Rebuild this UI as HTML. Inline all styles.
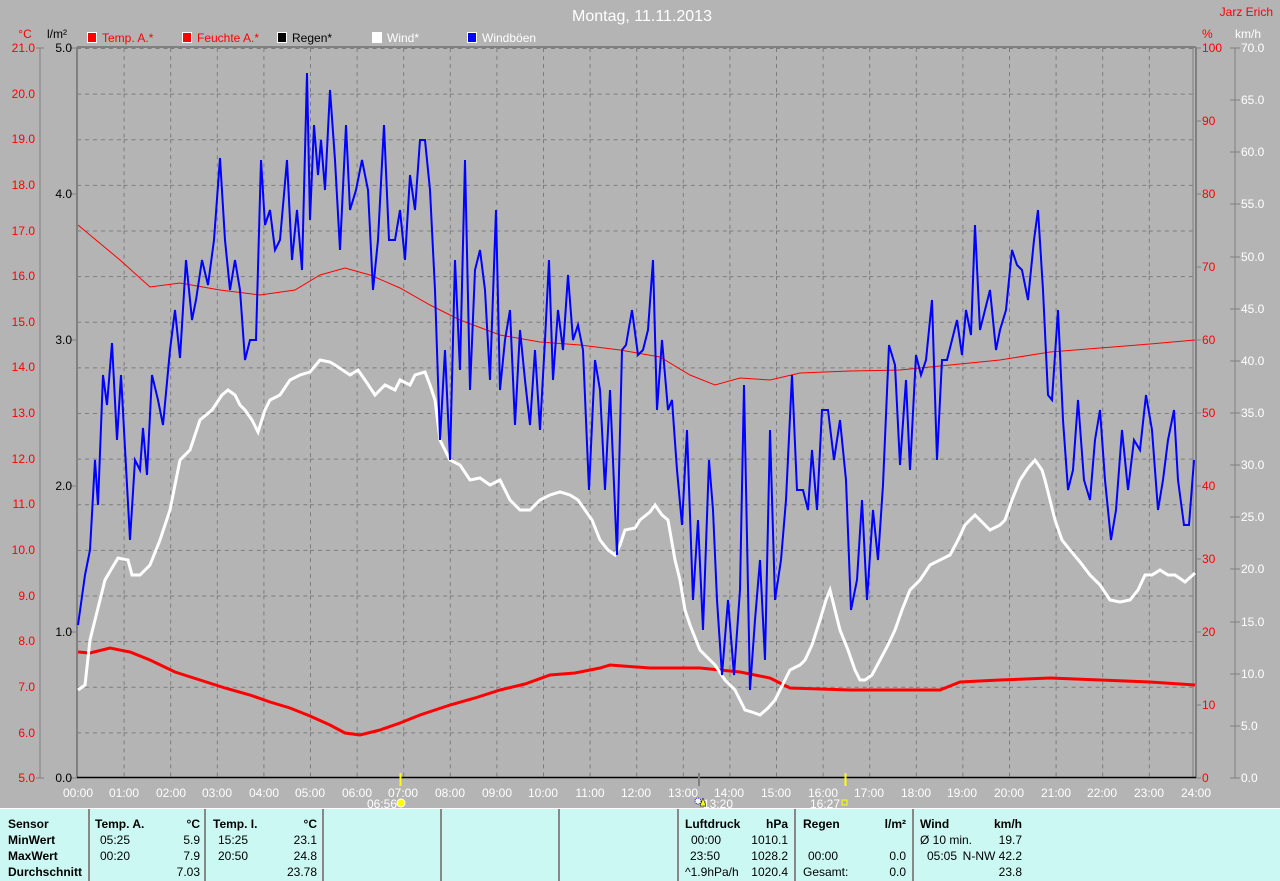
<!DOCTYPE html>
<html><head><meta charset="utf-8"><style>
body{margin:0;background:#b4b4b4;width:1280px;height:881px;overflow:hidden;font-family:"Liberation Sans",sans-serif}
svg{display:block}
</style></head><body>
<svg width="1280" height="881" xmlns="http://www.w3.org/2000/svg" font-family="Liberation Sans, sans-serif" font-size="12">
<defs>
<pattern id="g" x="77" y="48" width="46.6" height="45.625" patternUnits="userSpaceOnUse">
<line x1="0.5" y1="0" x2="0.5" y2="45.625" stroke="#7c7c7c" stroke-dasharray="4,4"/>
<line x1="0" y1="0.5" x2="46.6" y2="0.5" stroke="#7c7c7c" stroke-dasharray="4,4"/>
</pattern>
</defs>
<rect width="1280" height="881" fill="#b4b4b4"/>
<rect x="78" y="48" width="1117" height="729" fill="url(#g)"/>
<line x1="77" y1="47" x2="1196" y2="47" stroke="#808080" stroke-width="2"/>
<line x1="77" y1="47" x2="77" y2="778" stroke="#808080" stroke-width="2"/>
<line x1="1196" y1="47" x2="1196" y2="778" stroke="#808080" stroke-width="2"/>
<line x1="1193" y1="48" x2="1193" y2="777" stroke="#808080" stroke-width="1"/>
<line x1="77" y1="777.5" x2="1196" y2="777.5" stroke="#000" stroke-width="1.5"/>

<text x="642" y="21" fill="#fff" font-size="16" text-anchor="middle">Montag, 11.11.2013</text>
<text x="1273" y="16" fill="#f00" text-anchor="end">Jarz Erich</text>
<text x="25" y="38" fill="#f00" text-anchor="middle">°C</text>
<text x="57" y="38" fill="#000" text-anchor="middle">l/m²</text>
<text x="1202" y="38" fill="#f00">%</text>
<text x="1235" y="38" fill="#fff">km/h</text>

<g font-size="12">
<rect x="87.5" y="32.5" width="9" height="10" fill="#f00" stroke="#fff"/><text x="102" y="42" fill="#f00">Temp. A.*</text>
<rect x="182.5" y="32.5" width="9" height="10" fill="#f00" stroke="#fff"/><text x="197" y="42" fill="#f00">Feuchte A.*</text>
<rect x="277.5" y="32.5" width="9" height="10" fill="#000" stroke="#fff"/><text x="292" y="42" fill="#000">Regen*</text>
<rect x="372.5" y="32.5" width="9" height="10" fill="#fff" stroke="#fff"/><text x="387" y="42" fill="#fff">Wind*</text>
<rect x="467.5" y="32.5" width="9" height="10" fill="#00f" stroke="#fff"/><text x="482" y="42" fill="#fff">Windböen</text>
</g>

<!-- left axes -->
<line x1="40" y1="48" x2="40" y2="778" stroke="#808080"/>
<g stroke="#808080">
<line x1="36" y1="48" x2="44" y2="48"/><line x1="36" y1="778" x2="44" y2="778"/>
<line x1="70" y1="48" x2="77" y2="48"/><line x1="70" y1="194" x2="77" y2="194"/><line x1="70" y1="340" x2="77" y2="340"/><line x1="70" y1="486" x2="77" y2="486"/><line x1="70" y1="632" x2="77" y2="632"/><line x1="70" y1="778" x2="77" y2="778"/>
</g>
<g fill="#f00" text-anchor="end">
<text x="35" y="52">21.0</text><text x="35" y="98">20.0</text><text x="35" y="143">19.0</text><text x="35" y="189">18.0</text><text x="35" y="235">17.0</text><text x="35" y="280">16.0</text><text x="35" y="326">15.0</text><text x="35" y="371">14.0</text><text x="35" y="417">13.0</text><text x="35" y="463">12.0</text><text x="35" y="508">11.0</text><text x="35" y="554">10.0</text><text x="35" y="600">9.0</text><text x="35" y="645">8.0</text><text x="35" y="691">7.0</text><text x="35" y="737">6.0</text><text x="35" y="782">5.0</text>
</g>
<g fill="#000" text-anchor="end">
<text x="72" y="52">5.0</text><text x="72" y="198">4.0</text><text x="72" y="344">3.0</text><text x="72" y="490">2.0</text><text x="72" y="636">1.0</text><text x="72" y="782">0.0</text>
</g>
<!-- right axes -->
<line x1="1235" y1="48" x2="1235" y2="778" stroke="#808080"/>
<g stroke="#808080">
<line x1="1196" y1="48" x2="1201" y2="48"/><line x1="1196" y1="121" x2="1201" y2="121"/><line x1="1196" y1="194" x2="1201" y2="194"/><line x1="1196" y1="267" x2="1201" y2="267"/><line x1="1196" y1="340" x2="1201" y2="340"/><line x1="1196" y1="413" x2="1201" y2="413"/><line x1="1196" y1="486" x2="1201" y2="486"/><line x1="1196" y1="559" x2="1201" y2="559"/><line x1="1196" y1="632" x2="1201" y2="632"/><line x1="1196" y1="705" x2="1201" y2="705"/><line x1="1196" y1="778" x2="1201" y2="778"/>
<line x1="1230" y1="48" x2="1240" y2="48"/><line x1="1230" y1="100" x2="1240" y2="100"/><line x1="1230" y1="152" x2="1240" y2="152"/><line x1="1230" y1="204" x2="1240" y2="204"/><line x1="1230" y1="257" x2="1240" y2="257"/><line x1="1230" y1="309" x2="1240" y2="309"/><line x1="1230" y1="361" x2="1240" y2="361"/><line x1="1230" y1="413" x2="1240" y2="413"/><line x1="1230" y1="465" x2="1240" y2="465"/><line x1="1230" y1="517" x2="1240" y2="517"/><line x1="1230" y1="569" x2="1240" y2="569"/><line x1="1230" y1="622" x2="1240" y2="622"/><line x1="1230" y1="674" x2="1240" y2="674"/><line x1="1230" y1="726" x2="1240" y2="726"/><line x1="1230" y1="778" x2="1240" y2="778"/>
</g>
<g fill="#f00">
<text x="1202" y="52">100</text><text x="1202" y="125">90</text><text x="1202" y="198">80</text><text x="1202" y="271">70</text><text x="1202" y="344">60</text><text x="1202" y="417">50</text><text x="1202" y="490">40</text><text x="1202" y="563">30</text><text x="1202" y="636">20</text><text x="1202" y="709">10</text><text x="1202" y="782">0</text>
</g>
<g fill="#fff">
<text x="1241" y="52">70.0</text><text x="1241" y="104">65.0</text><text x="1241" y="156">60.0</text><text x="1241" y="208">55.0</text><text x="1241" y="261">50.0</text><text x="1241" y="313">45.0</text><text x="1241" y="365">40.0</text><text x="1241" y="417">35.0</text><text x="1241" y="469">30.0</text><text x="1241" y="521">25.0</text><text x="1241" y="573">20.0</text><text x="1241" y="626">15.0</text><text x="1241" y="678">10.0</text><text x="1241" y="730">5.0</text><text x="1241" y="782">0.0</text>
</g>
<!-- time labels -->
<g fill="#fff" text-anchor="middle">
<text x="78" y="797">00:00</text><text x="124" y="797">01:00</text><text x="171" y="797">02:00</text><text x="217" y="797">03:00</text><text x="264" y="797">04:00</text><text x="310" y="797">05:00</text><text x="357" y="797">06:00</text><text x="403" y="797">07:00</text><text x="450" y="797">08:00</text><text x="497" y="797">09:00</text><text x="543" y="797">10:00</text><text x="590" y="797">11:00</text><text x="636" y="797">12:00</text><text x="683" y="797">13:00</text><text x="729" y="797">14:00</text><text x="776" y="797">15:00</text><text x="823" y="797">16:00</text><text x="869" y="797">17:00</text><text x="916" y="797">18:00</text><text x="962" y="797">19:00</text><text x="1009" y="797">20:00</text><text x="1056" y="797">21:00</text><text x="1102" y="797">22:00</text><text x="1149" y="797">23:00</text><text x="1196" y="797">24:00</text>
<text x="382" y="808">06:56</text><text x="718" y="808">13:20</text><text x="825" y="808">16:27</text>
</g>
<line x1="400.5" y1="773" x2="400.5" y2="786" stroke="#ff0" stroke-width="2"/>
<circle cx="401" cy="803" r="4" fill="#ff0" stroke="#fff"/>
<line x1="845.5" y1="773" x2="845.5" y2="786" stroke="#ff0" stroke-width="2"/>
<rect x="842" y="800" width="5" height="5" fill="none" stroke="#ff0"/>
<line x1="699" y1="773" x2="699" y2="786" stroke="#808080" stroke-width="2"/>
<circle cx="698" cy="801" r="3" fill="#fff" stroke="#00f" stroke-dasharray="1,1"/>
<path d="M703 798 L706 806 L700 806 Z" fill="#ff0" stroke="#000" stroke-width="0.5"/>

<!-- data -->
<polyline fill="none" stroke="#f00" stroke-width="1" points="78,225 90,235 120,260 150,287 180,283 220,290 260,295 295,290 320,275 345,268 370,275 400,288 430,305 460,320 500,335 540,342 580,345 620,350 660,357 690,375 715,385 740,378 770,380 800,373 850,371 900,370 950,365 1000,360 1050,352 1100,348 1150,344 1195,340"/>
<polyline fill="none" stroke="#f00" stroke-width="3" points="78,652 90,653 110,648 130,652 150,660 175,672 200,680 225,688 250,695 270,702 290,708 310,716 330,725 345,733 360,735 380,730 400,723 420,715 450,705 475,698 500,690 525,684 550,675 575,673 600,668 610,665 650,668 700,668 740,672 770,678 790,688 850,690 900,690 940,690 960,682 1000,680 1050,678 1100,680 1150,682 1195,685"/>
<polyline fill="none" stroke="#fff" stroke-width="3" points="78,690 85,685 90,640 100,600 105,580 112,568 118,558 128,560 132,575 140,575 150,565 160,540 170,510 180,460 190,450 200,420 212,410 222,395 228,390 235,395 240,405 245,410 252,420 258,432 265,410 270,400 280,395 290,380 300,375 310,372 320,360 330,362 335,365 350,375 358,370 365,380 375,395 380,390 385,385 395,390 400,380 410,385 415,375 425,372 430,385 435,400 440,440 450,460 460,465 470,480 480,478 490,485 500,480 510,500 520,510 530,510 540,500 550,495 560,492 570,495 578,500 585,510 592,520 600,540 608,550 615,555 620,545 625,530 635,528 640,520 650,512 655,505 662,515 668,520 675,560 680,580 685,610 690,625 700,650 710,660 715,665 725,680 735,690 740,700 745,710 752,712 760,715 768,708 775,700 785,680 790,670 800,665 805,660 812,645 820,620 826,600 830,590 835,610 840,630 848,650 855,670 860,680 865,680 872,675 880,660 888,645 895,630 902,610 910,590 920,580 930,565 940,560 950,555 958,540 965,525 975,515 982,522 990,530 1000,525 1005,520 1012,500 1020,480 1028,468 1035,460 1042,470 1045,480 1050,500 1055,520 1062,540 1070,550 1080,562 1090,575 1100,585 1110,600 1120,602 1130,600 1138,590 1145,575 1152,575 1160,570 1168,575 1175,575 1185,582 1195,573"/>
<polyline fill="none" stroke="#00f" stroke-width="2" points="78,625 85,575 90,550 95,460 98,505 103,375 107,405 112,343 117,440 121,375 130,540 135,460 140,470 143,428 147,475 152,375 158,400 163,425 170,350 175,310 180,358 186,260 192,320 196,300 202,260 208,285 214,240 220,158 225,240 230,290 235,260 240,290 245,360 250,340 256,340 261,160 265,225 270,210 275,250 280,240 287,160 292,260 297,210 302,270 307,73 310,220 314,125 318,175 321,140 325,190 330,90 335,160 340,250 346,125 350,210 356,190 362,160 368,190 373,290 378,240 384,125 389,240 395,240 400,210 405,260 410,175 415,210 420,140 425,140 430,190 435,290 440,440 445,350 450,460 455,260 460,370 465,160 470,390 475,270 480,250 485,290 490,380 496,210 500,390 505,340 510,310 515,425 520,330 525,380 530,425 535,350 540,430 545,340 549,260 553,380 558,310 563,350 568,275 573,340 578,325 583,350 589,490 595,360 600,390 605,490 610,390 617,555 622,350 626,345 632,310 638,355 643,350 648,330 653,260 657,410 662,340 668,410 672,400 677,470 682,525 687,430 693,600 698,520 703,630 709,460 713,510 717,600 722,675 728,600 734,675 740,590 744,385 750,690 755,620 760,560 765,660 770,430 775,600 781,560 786,500 792,375 797,490 803,490 808,510 812,450 817,510 822,410 828,410 834,460 840,420 846,480 851,610 857,580 862,500 867,600 873,510 878,560 883,485 889,345 895,365 900,465 906,380 910,470 916,355 921,375 926,360 932,300 937,460 942,360 947,360 952,340 957,320 962,355 966,310 971,335 975,225 980,330 985,310 990,290 996,350 1000,330 1006,310 1012,250 1017,265 1022,270 1028,300 1034,240 1038,210 1043,290 1048,395 1052,400 1058,310 1063,420 1068,490 1073,470 1078,400 1084,480 1090,500 1095,440 1100,410 1105,480 1111,540 1116,510 1122,430 1128,490 1134,440 1140,450 1146,395 1152,430 1158,510 1163,480 1168,440 1174,410 1178,480 1184,525 1189,525 1194,460"/>

<!-- table -->
<rect x="0" y="808" width="1280" height="73" fill="#ccf8f4"/>
<line x1="0" y1="808.5" x2="1280" y2="808.5" stroke="#fff"/>
<g stroke="#888" stroke-width="2">
<line x1="89" y1="809" x2="89" y2="881"/><line x1="205" y1="809" x2="205" y2="881"/><line x1="323" y1="809" x2="323" y2="881"/><line x1="441" y1="809" x2="441" y2="881"/><line x1="559" y1="809" x2="559" y2="881"/><line x1="678" y1="809" x2="678" y2="881"/><line x1="795" y1="809" x2="795" y2="881"/><line x1="913" y1="809" x2="913" y2="881"/>
</g>
<g font-size="12" fill="#000">
<g font-weight="bold"><text x="8" y="828">Sensor</text><text x="8" y="844">MinWert</text><text x="8" y="860">MaxWert</text><text x="8" y="876">Durchschnitt</text>
<text x="95" y="828">Temp. A.</text><text x="200" y="828" text-anchor="end">°C</text>
<text x="213" y="828">Temp. I.</text><text x="317" y="828" text-anchor="end">°C</text>
<text x="685" y="828">Luftdruck</text><text x="788" y="828" text-anchor="end">hPa</text>
<text x="803" y="828">Regen</text><text x="906" y="828" text-anchor="end">l/m²</text>
<text x="920" y="828">Wind</text><text x="1022" y="828" text-anchor="end">km/h</text></g>
<text x="100" y="844">05:25</text><text x="200" y="844" text-anchor="end">5.9</text>
<text x="100" y="860">00:20</text><text x="200" y="860" text-anchor="end">7.9</text>
<text x="200" y="876" text-anchor="end">7.03</text>
<text x="218" y="844">15:25</text><text x="317" y="844" text-anchor="end">23.1</text>
<text x="218" y="860">20:50</text><text x="317" y="860" text-anchor="end">24.8</text>
<text x="317" y="876" text-anchor="end">23.78</text>
<text x="691" y="844">00:00</text><text x="788" y="844" text-anchor="end">1010.1</text>
<text x="690" y="860">23:50</text><text x="788" y="860" text-anchor="end">1028.2</text>
<text x="685" y="876">^1.9hPa/h</text><text x="788" y="876" text-anchor="end">1020.4</text>
<text x="808" y="860">00:00</text><text x="906" y="860" text-anchor="end">0.0</text>
<text x="803" y="876">Gesamt:</text><text x="906" y="876" text-anchor="end">0.0</text>
<text x="920" y="844">Ø 10 min.</text><text x="1022" y="844" text-anchor="end">19.7</text>
<text x="927" y="860">05:05</text><text x="1022" y="860" text-anchor="end">N-NW 42.2</text>
<text x="1022" y="876" text-anchor="end">23.8</text>
</g>
</svg>
</body></html>
